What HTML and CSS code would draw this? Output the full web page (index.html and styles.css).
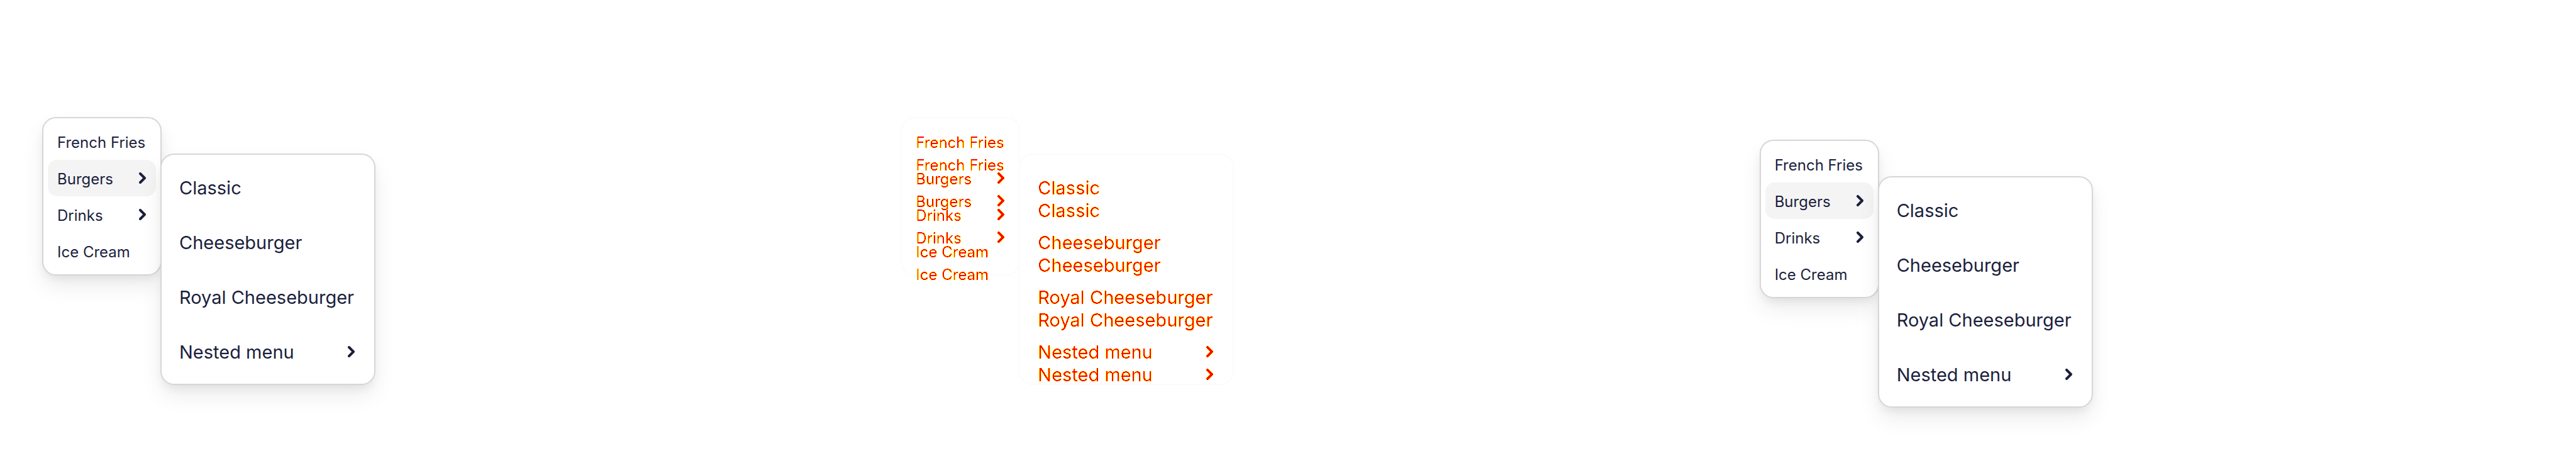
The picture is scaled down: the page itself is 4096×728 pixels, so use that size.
FILE: index.html
```html
<!DOCTYPE html>
<html lang="en">
<head>
<meta charset="utf-8">
<meta name="viewport" content="width=device-width, initial-scale=1">
<title>Nested menu</title>
<link rel="stylesheet" href="styles.css">
</head>
<body>
<svg class="defs" aria-hidden="true">
  <symbol id="chevron" viewBox="0 0 11 18"><path d="M2 2l7 7-7 7" fill="none" stroke="currentColor" stroke-width="4" stroke-linecap="round" stroke-linejoin="round"/></symbol>
  <filter id="changed" color-interpolation-filters="sRGB">
    <feColorMatrix values="0 0 0 0 1  0 0 0 1 0  0 0 0 0 0  0 0 0 1 0"/>
    <feComponentTransfer>
      <feFuncG type="discrete" tableValues="1 1 1 1 1 1 1 0 0 0"/>
      <feFuncA type="discrete" tableValues="0 1 1 1 1 1 1 1 1 1"/>
    </feComponentTransfer>
  </filter>
</svg>
<main class="board">
  <section class="panel">
    <div class="cascade">
      <div class="menu" role="menu">
        <button class="item" role="menuitem"><span>French Fries</span></button>
        <button class="item active" role="menuitem"><span>Burgers</span><svg class="chevron"><use href="#chevron"/></svg></button>
        <button class="item" role="menuitem"><span>Drinks</span><svg class="chevron"><use href="#chevron"/></svg></button>
        <button class="item" role="menuitem"><span>Ice Cream</span></button>
      </div>
      <div class="menu submenu" role="menu">
        <button class="item" role="menuitem"><span>Classic</span></button>
        <button class="item" role="menuitem"><span>Cheeseburger</span></button>
        <button class="item" role="menuitem"><span>Royal Cheeseburger</span></button>
        <button class="item" role="menuitem"><span>Nested menu</span><svg class="chevron"><use href="#chevron"/></svg></button>
      </div>
    </div>
  </section>
  <section class="panel diff">
    <div class="cascade">
      <div class="menu" role="menu">
        <button class="item" role="menuitem"><span>French Fries</span></button>
        <button class="item" role="menuitem"><span>Burgers</span><svg class="chevron"><use href="#chevron"/></svg></button>
        <button class="item" role="menuitem"><span>Drinks</span><svg class="chevron"><use href="#chevron"/></svg></button>
        <button class="item" role="menuitem"><span>Ice Cream</span></button>
      </div>
      <div class="menu submenu" role="menu">
        <button class="item" role="menuitem"><span>Classic</span></button>
        <button class="item" role="menuitem"><span>Cheeseburger</span></button>
        <button class="item" role="menuitem"><span>Royal Cheeseburger</span></button>
        <button class="item" role="menuitem"><span>Nested menu</span><svg class="chevron"><use href="#chevron"/></svg></button>
      </div>
    </div>
    <div class="cascade lowered ghost">
      <div class="menu" role="menu">
        <button class="item" role="menuitem"><span>French Fries</span></button>
        <button class="item" role="menuitem"><span>Burgers</span><svg class="chevron"><use href="#chevron"/></svg></button>
        <button class="item" role="menuitem"><span>Drinks</span><svg class="chevron"><use href="#chevron"/></svg></button>
        <button class="item" role="menuitem"><span>Ice Cream</span></button>
      </div>
      <div class="menu submenu" role="menu">
        <button class="item" role="menuitem"><span>Classic</span></button>
        <button class="item" role="menuitem"><span>Cheeseburger</span></button>
        <button class="item" role="menuitem"><span>Royal Cheeseburger</span></button>
        <button class="item" role="menuitem"><span>Nested menu</span><svg class="chevron"><use href="#chevron"/></svg></button>
      </div>
    </div>
  </section>
  <section class="panel">
    <div class="cascade lowered">
      <div class="menu" role="menu">
        <button class="item" role="menuitem"><span>French Fries</span></button>
        <button class="item active" role="menuitem"><span>Burgers</span><svg class="chevron"><use href="#chevron"/></svg></button>
        <button class="item" role="menuitem"><span>Drinks</span><svg class="chevron"><use href="#chevron"/></svg></button>
        <button class="item" role="menuitem"><span>Ice Cream</span></button>
      </div>
      <div class="menu submenu" role="menu">
        <button class="item" role="menuitem"><span>Classic</span></button>
        <button class="item" role="menuitem"><span>Cheeseburger</span></button>
        <button class="item" role="menuitem"><span>Royal Cheeseburger</span></button>
        <button class="item" role="menuitem"><span>Nested menu</span><svg class="chevron"><use href="#chevron"/></svg></button>
      </div>
    </div>
  </section>
</main>
</body>
</html>
```
FILE: styles.css
```css
* { box-sizing: border-box; }

body {
  margin: 0;
  background: #fff;
  color: #1b1f3d;
  font-family: Inter, "Liberation Sans", sans-serif;
}

.defs { position: absolute; width: 0; height: 0; }

.board {
  display: grid;
  grid-template-columns: repeat(3, 1fr);
  min-height: 100vh;
}

.panel {
  display: grid;
  align-content: start;
  align-items: start;
  padding: 186px 0 0 67px;
}

.cascade {
  grid-area: 1 / 1;
  display: flex;
  align-items: flex-start;
}

.lowered { margin-top: 36px; }

.menu {
  display: flex;
  flex-direction: column;
  min-width: 190px;
  padding: 8px 7px;
  border: 2px solid #d6d6d6;
  border-radius: 22px;
  background: #fff;
  box-shadow: 0 18px 34px rgba(0, 0, 0, 0.07), 0 8px 16px -4px rgba(0, 0, 0, 0.08);
}

.item {
  display: flex;
  align-items: center;
  justify-content: space-between;
  height: 58px;
  padding: 0 16px 0 15px;
  border: 0;
  border-radius: 15px;
  background: transparent;
  color: inherit;
  font: inherit;
  font-size: 24px;
  white-space: nowrap;
}

.active { background: #f4f4f4; }

.submenu {
  min-width: 342px;
  margin: 58px 0 0 -2px;
}

.submenu .item {
  height: 87px;
  padding: 0 24px 0 21px;
  font-size: 29px;
}

.item span { padding-top: 2px; }

.chevron {
  width: 11px;
  height: 18px;
}

.diff .menu {
  border-color: #fbfbfb;
  background: transparent;
  box-shadow: none;
}

.diff .ghost .menu { border-color: transparent; }

.diff .item span,
.diff .chevron { filter: url(#changed); }
```
